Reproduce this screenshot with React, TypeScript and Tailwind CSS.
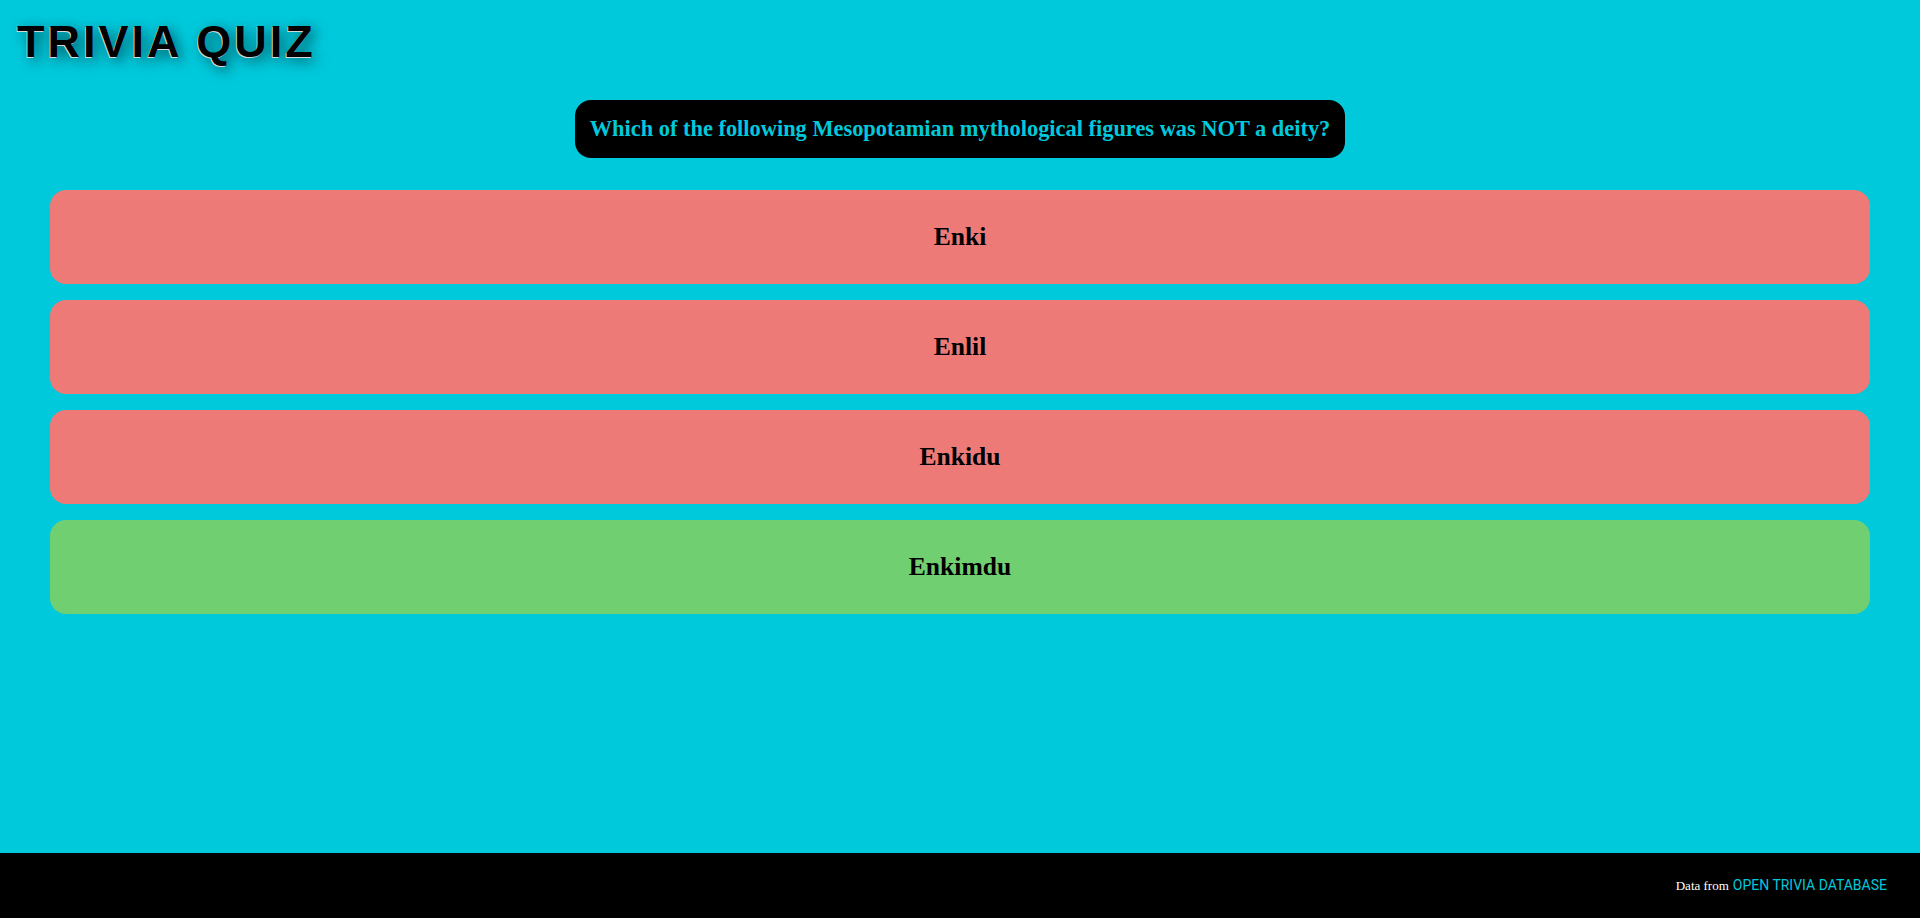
import React from "react";

const answers = [
  { text: "Enki", correct: false },
  { text: "Enlil", correct: false },
  { text: "Enkidu", correct: false },
  { text: "Enkimdu", correct: true },
];

export default function App() {
  return (
    <div className="min-h-screen flex flex-col bg-[#00c9dc]">
      <main className="flex-1 flex flex-col">
        <h1 className="pt-[19px] pl-[17px] text-[45px] leading-none font-bold tracking-[3px] text-black font-['Liberation_Sans',Arial,sans-serif] [text-shadow:-1px_1px_0_#d8d8d8,4px_4px_14px_rgba(0,0,0,0.6)]">
          TRIVIA QUIZ
        </h1>
        <div className="flex justify-center mt-[36px]">
          <div className="h-[58px] flex items-center px-[15px] bg-black rounded-2xl">
            <h2 className="text-[22.4px] font-bold text-[#00c9dc] font-['Liberation_Serif','Times_New_Roman',serif]">
              Which of the following Mesopotamian mythological figures was NOT a deity?
            </h2>
          </div>
        </div>
        <div className="flex flex-col gap-4 px-[50px] mt-[32px]">
          {answers.map((a) => (
            <button
              key={a.text}
              className={
                a.correct
                  ? "h-[94px] w-full rounded-2xl bg-[#70cf70] text-black text-[25.6px] font-bold font-['Liberation_Serif','Times_New_Roman',serif]"
                  : "h-[94px] w-full rounded-2xl bg-[#ee7a78] text-black text-[25.6px] font-bold font-['Liberation_Serif','Times_New_Roman',serif]"
              }
            >
              {a.text}
            </button>
          ))}
        </div>
      </main>
      <footer className="h-[65px] bg-black flex items-center justify-end pr-[33px]">
        <span className="text-white text-[13px] font-['Liberation_Serif','Times_New_Roman',serif]">
          Data from
        </span>
        <a className="ml-[4px] text-[#00c9dc] text-[14px] font-['Roboto',sans-serif]">
          OPEN TRIVIA DATABASE
        </a>
      </footer>
    </div>
  );
}
